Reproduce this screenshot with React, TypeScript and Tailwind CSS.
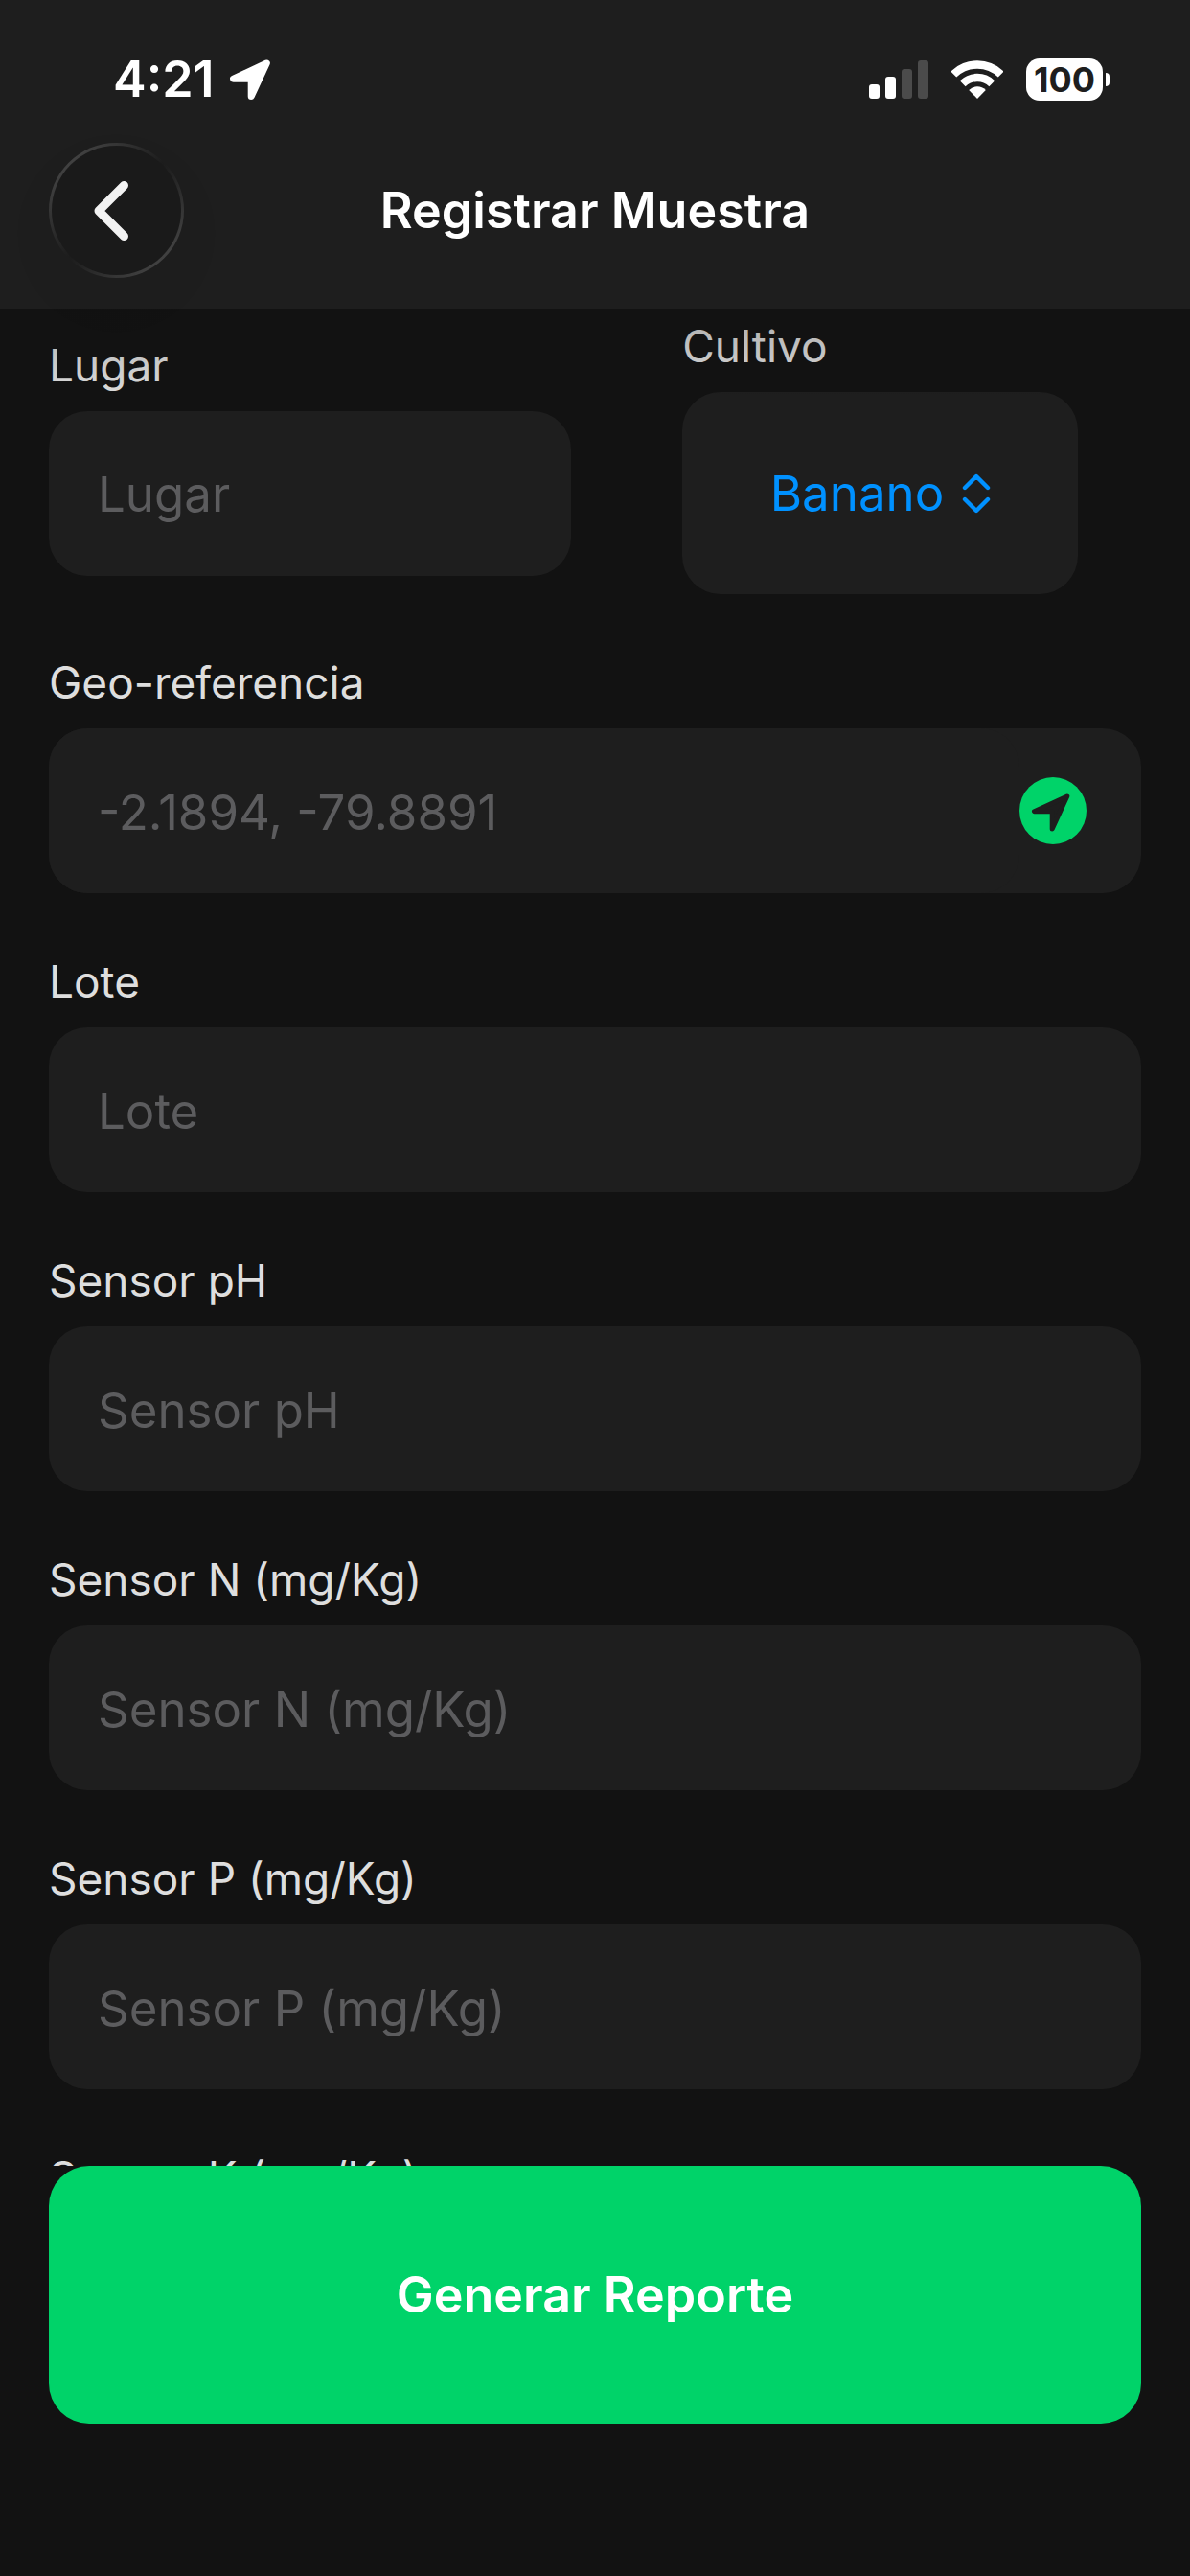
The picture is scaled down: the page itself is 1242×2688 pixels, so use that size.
import { useState } from 'react'

const sensorFields = [
  { id: 'lote', label: 'Lote' },
  { id: 'ph', label: 'Sensor pH' },
  { id: 'n', label: 'Sensor N (mg/Kg)' },
  { id: 'p', label: 'Sensor P (mg/Kg)' },
  { id: 'k', label: 'Sensor K (mg/Kg)' },
]

const labelClass = 'text-[46px] leading-14 text-[#dedede]'
const inputClass =
  'h-[172px] w-full min-w-0 rounded-[40px] bg-[#1e1e1e] px-[51px] pt-[2px] text-[51px] text-white outline-none placeholder:text-[#5c5c5e]'

function StatusBar() {
  return (
    <div className="flex h-11 items-center justify-between pl-[118px] pr-[84px]">
      <div className="flex items-center gap-4">
        <span className="text-[52px] leading-11 font-semibold">4:21</span>
        <svg width="42" height="42" viewBox="0 0 42 42">
          <path
            d="M38.3 3.9 L3.6 20.2 H22.2 V38.4 Z"
            fill="white"
            stroke="white"
            strokeWidth="7"
            strokeLinejoin="round"
          />
        </svg>
      </div>

      <div className="flex items-center gap-6">
        <svg width="62" height="40" viewBox="0 0 62 40">
          <rect x="0" y="25" width="11" height="15" rx="3" fill="white" />
          <rect x="17" y="17" width="11" height="23" rx="3" fill="white" />
          <rect x="34" y="9" width="11" height="31" rx="3" fill="#4b4b4b" />
          <rect x="51" y="0" width="11" height="40" rx="3" fill="#4b4b4b" />
        </svg>
        <svg width="54" height="40" viewBox="0 0 54 40">
          <path d="M2.3 14.5 A35.5 35.5 0 0 1 51.7 14.5" fill="none" stroke="white" strokeWidth="8.4" />
          <path d="M11.7 24.2 A22 22 0 0 1 42.3 24.2" fill="none" stroke="white" strokeWidth="8.4" />
          <path d="M27 40 L18.2 30.9 A12.7 12.7 0 0 1 35.8 30.9 Z" fill="white" />
        </svg>
        <div className="flex items-center gap-[3px]">
          <span className="flex h-11 w-20 items-center justify-center rounded-[14px] bg-white text-[36px] leading-11 font-bold text-[#1e1e1e]">
            100
          </span>
          <span className="h-[14px] w-1 rounded-r-full bg-white" />
        </div>
      </div>
    </div>
  )
}

function Header() {
  return (
    <header className="bg-[#1e1e1e] pt-[61px] pb-8 text-white">
      <StatusBar />
      <div className="mt-11 grid grid-cols-[1fr_auto_1fr] items-center px-[51px]">
        <button
          type="button"
          aria-label="Atrás"
          className="size-[141px] rounded-full bg-linear-135 from-[#525252] via-[#1c1c1c] to-[#525252] p-[3px] shadow-[0_24px_60px_rgba(0,0,0,0.04)]"
        >
          <span className="flex size-full items-center justify-center rounded-full bg-[#1a1a1a] pr-3">
            <svg width="36" height="62" viewBox="0 0 36 62">
              <path
                d="M31.5 4.5 L5 31 L31.5 57.5"
                fill="none"
                stroke="#f2f2f2"
                strokeWidth="9"
                strokeLinecap="round"
                strokeLinejoin="round"
              />
            </svg>
          </span>
        </button>
        <h1 className="text-[52px] leading-16 font-semibold">Registrar Muestra</h1>
      </div>
    </header>
  )
}

export default function App() {
  const [values, setValues] = useState<Record<string, string>>({})
  const [cultivo, setCultivo] = useState('Banano')

  const handleChange = (e: React.ChangeEvent<HTMLInputElement>) => {
    setValues({ ...values, [e.target.name]: e.target.value })
  }

  return (
    <div className="flex h-screen flex-col bg-[#121212] font-[Inter,sans-serif]">
      <Header />

      <main className="relative min-h-0 flex-1 overflow-hidden">
        <form id="muestra" className="flex flex-col gap-16 px-[51px] pt-[11px]">
          <div className="grid grid-cols-2 items-center gap-[51px]">
            <div className="flex flex-col gap-5">
              <label htmlFor="lugar" className={labelClass}>
                Lugar
              </label>
              <input
                id="lugar"
                name="lugar"
                placeholder="Lugar"
                value={values.lugar ?? ''}
                onChange={handleChange}
                className={inputClass}
              />
            </div>

            <div className="flex w-[413px] flex-col gap-5 justify-self-center">
              <label htmlFor="cultivo" className={labelClass}>
                Cultivo
              </label>
              <div className="flex h-[211px] items-center justify-center gap-[18px] rounded-[40px] bg-[#1e1e1e] text-[#0091ff]">
                <select
                  id="cultivo"
                  value={cultivo}
                  onChange={(e) => setCultivo(e.target.value)}
                  className="appearance-none bg-transparent pt-[2px] text-[51px] outline-none"
                >
                  <option>Banano</option>
                </select>
                <svg width="30" height="42" viewBox="0 0 30 42">
                  <path
                    d="M3 15 L15 3 L27 15 M3 27 L15 39 L27 27"
                    fill="none"
                    stroke="currentColor"
                    strokeWidth="4.4"
                    strokeLinecap="round"
                    strokeLinejoin="round"
                  />
                </svg>
              </div>
            </div>
          </div>

          <div className="flex flex-col gap-5">
            <label htmlFor="geo" className={labelClass}>
              Geo-referencia
            </label>
            <div className="flex items-center rounded-[40px] bg-[#1e1e1e] pr-[57px]">
              <input
                id="geo"
                name="geo"
                placeholder="-2.1894, -79.8891"
                value={values.geo ?? ''}
                onChange={handleChange}
                className={inputClass}
              />
              <button type="button" aria-label="Usar mi ubicación" className="shrink-0">
                <svg width="70" height="70" viewBox="0 0 70 70">
                  <circle cx="35" cy="35" r="35" fill="#00d369" />
                  <path
                    d="M49.8 20 L15.5 35.8 H34.2 V54 Z"
                    fill="#1e1e1e"
                    stroke="#1e1e1e"
                    strokeWidth="5"
                    strokeLinejoin="round"
                  />
                </svg>
              </button>
            </div>
          </div>

          {sensorFields.map((field) => (
            <div key={field.id} className="flex flex-col gap-5">
              <label htmlFor={field.id} className={labelClass}>
                {field.label}
              </label>
              <input
                id={field.id}
                name={field.id}
                placeholder={field.label}
                value={values[field.id] ?? ''}
                onChange={handleChange}
                className={inputClass}
              />
            </div>
          ))}
        </form>

        {/* content fades out as it scrolls under the header */}
        <div className="pointer-events-none absolute inset-x-0 top-0 h-24 bg-linear-to-b from-[#121212]/25 to-transparent" />
      </main>

      <footer className="px-[51px] pb-[159px]">
        <button
          type="submit"
          form="muestra"
          className="h-[269px] w-full rounded-[42px] bg-[#00d369] text-[52px] font-semibold text-white"
        >
          Generar Reporte
        </button>
      </footer>
    </div>
  )
}
